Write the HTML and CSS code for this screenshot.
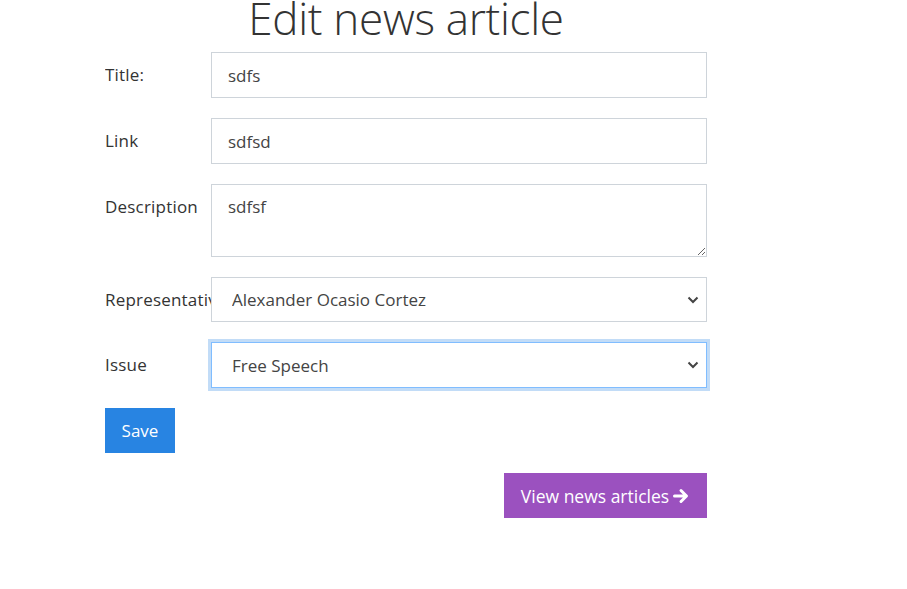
FILE: index.html
```html
<!DOCTYPE html>
<html>
<head>
<meta charset="utf-8">
<link rel="stylesheet" href="styles.css">
</head>
<body>
<div class="page">
  <h1 class="heading">Edit news article</h1>
  <form class="form">
    <div class="row">
      <label class="label">Title:</label>
      <input class="control" type="text" value="sdfs">
    </div>
    <div class="row">
      <label class="label">Link</label>
      <input class="control" type="text" value="sdfsd">
    </div>
    <div class="row">
      <label class="label">Description</label>
      <textarea class="control area">sdfsf</textarea>
    </div>
    <div class="row">
      <label class="label">Representative</label>
      <div class="select-wrap">
        <select class="control select"><option>Alexander Ocasio Cortez</option></select>
        <svg class="chev" width="12" height="8" viewBox="0 0 12 8"><path d="M1.5 1.5 L6 6 L10.5 1.5" fill="none" stroke="#444" stroke-width="2"/></svg>
      </div>
    </div>
    <div class="row">
      <label class="label">Issue</label>
      <div class="select-wrap">
        <select class="control select focus"><option>Free Speech</option></select>
        <svg class="chev" width="12" height="8" viewBox="0 0 12 8"><path d="M1.5 1.5 L6 6 L10.5 1.5" fill="none" stroke="#444" stroke-width="2"/></svg>
      </div>
    </div>
    <div class="actions">
      <button type="button" class="btn btn-save">Save</button>
    </div>
    <div class="nav">
      <a class="btn btn-view">View news articles <svg class="arrow" width="17" height="16" viewBox="0 0 17 16"><path d="M1.5 8 H13 M8 2.5 L13.5 8 L8 13.5" fill="none" stroke="#fff" stroke-width="3" stroke-linecap="round" stroke-linejoin="round"/></svg></a>
    </div>
  </form>
</div>
</body>
</html>
```
FILE: styles.css
```css
html, body {
  margin: 0;
  padding: 0;
  background: #fff;
}
body {
  font-family: "Open Sans", "Noto Sans", sans-serif;
  color: #333;
}
.page {
  width: 602px;
  margin-left: 105px;
}
.heading {
  margin: -14px 0 0 0;
  padding-bottom: 2px;
  text-align: center;
  font-weight: 300;
  font-size: 44px;
  line-height: 64px;
  color: #333;
  letter-spacing: -0.3px;
}
.form {
  display: flex;
  flex-direction: column;
}
.row {
  display: flex;
  align-items: flex-start;
  margin-bottom: 20px;
}
.label {
  width: 106px;
  flex: none;
  overflow: hidden;
  white-space: nowrap;
  font-size: 17px;
  line-height: 24px;
  padding-top: 11px;
  color: #333;
  letter-spacing: 0.2px;
}
.control {
  box-sizing: border-box;
  width: 496px;
  height: 46px;
  border: 1px solid #ced4da;
  border-radius: 0;
  padding: 0 16px;
  font-family: "Open Sans", "Noto Sans", sans-serif;
  font-size: 17px;
  color: #444;
  background: #fff;
  outline: none;
  margin: 0;
}
.area {
  height: 73px;
  padding-top: 10px;
  resize: vertical;
  display: block;
}
.select-wrap {
  position: relative;
  width: 496px;
}
.select {
  -webkit-appearance: none;
  appearance: none;
  height: 45px;
  padding-left: 20px;
  display: block;
}
.select.focus {
  height: 46px;
  border-color: #80bdff;
  box-shadow: 0 0 0 3px #c2dcf7;
}
.chev {
  position: absolute;
  right: 8px;
  top: 19px;
}
.actions {
  display: flex;
}
.btn {
  box-sizing: border-box;
  display: inline-flex;
  align-items: center;
  height: 45px;
  border: 0;
  border-radius: 0;
  color: #fff;
  font-family: "Open Sans", "Noto Sans", sans-serif;
  font-size: 17px;
  text-decoration: none;
}
.btn-save {
  background: #2884e2;
  width: 70px;
  justify-content: center;
  padding: 0;
}
.nav {
  display: flex;
  justify-content: flex-end;
  margin-top: 20px;
}
.btn-view {
  background: #9b51bf;
  width: 203px;
  justify-content: center;
  gap: 4px;
  padding: 0;
  font-size: 17.5px;
}
.arrow {
  display: block;
}
```
